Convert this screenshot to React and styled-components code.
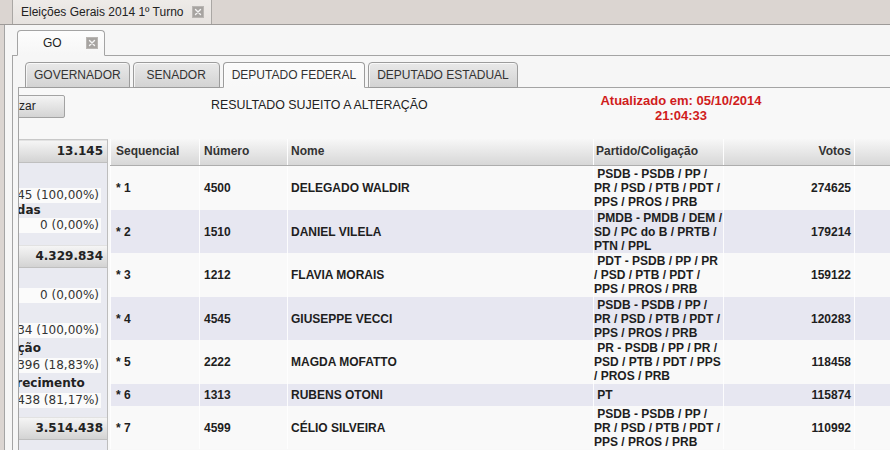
import React from 'react';
import styled, { createGlobalStyle } from 'styled-components';

const Global = createGlobalStyle`
  html, body { margin: 0; padding: 0; background: #dbd5d1; }
  body { font-family: "Liberation Sans", Arial, sans-serif; }
`;

const COLS = '89px 88px 306px 130px 131px 160px';
const LINE = '#a4a4a4';

const Root = styled.div`
  width: 890px;
  height: 450px;
  overflow: hidden;
  background: #dbd5d1;
  font-family: "Liberation Sans", Arial, sans-serif;
  font-size: 12px;
  color: #222;
  display: flex;
  flex-direction: column;
`;

const WindowTabs = styled.div`
  height: 24px;
  flex: none;
  border-bottom: 1px solid #9d9a98;
  display: flex;
  padding-left: 12px;
`;

const WinTab = styled.div`
  display: flex;
  align-items: center;
  gap: 9px;
  height: 24px;
  box-sizing: border-box;
  padding: 0 7px 0 8px;
  border-left: 1px solid #aaa7a4;
  border-right: 1px solid #aaa7a4;
  background: linear-gradient(#eeebe8, #e6e2df);
  color: #222;
`;

const Panel = styled.div`
  flex: 1;
  display: flex;
  flex-direction: column;
  margin-left: ${(p) => p.$indent}px;
  border-left: 1px solid ${LINE};
  border-top: ${(p) => (p.$top ? `1px solid ${LINE}` : 'none')};
  background: ${(p) => p.$bg};
  padding-top: ${(p) => p.$pt}px;
  min-height: 0;
`;

const TabStrip = styled.div`
  display: flex;
  gap: 3px;
  padding-left: 12px;
  flex: none;
`;

const StateTab = styled.div`
  position: relative;
  z-index: 1;
  display: flex;
  align-items: center;
  height: 26px;
  box-sizing: border-box;
  margin-bottom: -1px;
  padding: 0 6px 0 25px;
  border: 1px solid ${LINE};
  border-bottom-color: #f6f6f6;
  border-radius: 4px 4px 0 0;
  background: linear-gradient(#fdfdfd, #f6f6f6);
  color: #222;
  & > svg { margin-left: 24px; }
`;

const Tab = styled.div`
  position: relative;
  z-index: 1;
  height: 26px;
  min-width: 87px;
  box-sizing: border-box;
  margin-bottom: -1px;
  padding: 0 8px;
  border: 1px solid #9c9c9c;
  border-bottom-color: ${(p) => (p.$active ? '#f8f8f8' : '#9c9c9c')};
  border-radius: 4px 4px 0 0;
  background: ${(p) =>
    p.$active ? 'linear-gradient(#fbfbfb, #f8f8f8)' : 'linear-gradient(#e9e9e9, #d3d3d3)'};
  box-shadow: inset 1px 1px 0 rgba(255, 255, 255, 0.7);
  line-height: 24px;
  text-align: center;
  white-space: nowrap;
  color: #333;
`;

const Scroller = styled.div`
  flex: 1;
  overflow: hidden;
`;

const Scrolled = styled.div`
  width: 1300px;
  margin-left: -80px;
`;

const TopBar = styled.div`
  height: 51px;
  box-sizing: border-box;
  padding-top: 7px;
  display: flex;
  align-items: flex-start;
`;

const RefreshButton = styled.div`
  margin-left: 30px;
  width: 96px;
  height: 23px;
  box-sizing: border-box;
  padding-left: 19px;
  border: 1px solid #a3a3a3;
  border-radius: 2px;
  background: linear-gradient(#f4f4f4, #d4d4d4);
  line-height: 21px;
  color: #222;
`;

const Notice = styled.div`
  margin-left: 146px;
  width: 350px;
  padding-top: 3px;
  font-size: 12.4px;
  line-height: 14px;
  color: #222;
`;

const Updated = styled.div`
  width: 240px;
  margin-top: -2px;
  text-align: center;
  font-weight: bold;
  font-size: 13px;
  line-height: 15px;
  color: #d01c1c;
`;

const Body = styled.div`
  display: flex;
  align-items: flex-start;
`;

const SummaryPanel = styled.div`
  width: 169px;
  height: 330px;
  box-sizing: border-box;
  margin-right: 2px;
  border-top: 1px solid #c9c9c9;
  border-right: 1px solid #bdbdbd;
  background: #e9eaf1;
  font-family: "DejaVu Sans", Verdana, sans-serif;
  font-size: 12px;
  color: #222;
`;

const SumHeader = styled.div`
  height: 23px;
  box-sizing: border-box;
  padding-right: 4px;
  border-top: 1px solid #e2e2e2;
  border-bottom: 1px solid #bfbfbf;
  background: linear-gradient(#f5f5f5, #d3d3d3);
  text-align: right;
  font-weight: bold;
  line-height: 21px;
  color: #222;
`;

const SumLabel = styled.div`
  height: ${(p) => p.$h}px;
  line-height: ${(p) => p.$h}px;
  padding-left: ${(p) => 8 + p.$indent}px;
  font-weight: bold;
  white-space: nowrap;
  overflow: hidden;
`;

const SumValue = styled.div`
  height: 15px;
  line-height: 15px;
  margin-right: 6px;
  padding-right: 2px;
  background: #fbfbfb;
  text-align: right;
  white-space: nowrap;
  color: #333;
`;

const SumSpacer = styled.div`
  height: ${(p) => p.$h}px;
`;

const Table = styled.div`
  display: flex;
  flex-direction: column;
`;

const HeadRow = styled.div`
  display: grid;
  grid-template-columns: ${COLS};
  height: 27px;
  box-sizing: border-box;
  border-bottom: 1px solid #adadad;
  background: linear-gradient(#f7f7f7, #d7d7d7);
`;

const HeadCell = styled.div`
  border-left: 1px solid #fdfdfd;
  padding-left: ${(p) => p.$pl}px;
  padding-right: ${(p) => p.$pr}px;
  text-align: ${(p) => p.$align};
  line-height: 25px;
  font-weight: bold;
  color: #333;
  white-space: nowrap;
`;

const Row = styled.div`
  display: grid;
  grid-template-columns: ${COLS};
  min-height: 22px;
  background: ${(p) => (p.$alt ? '#e7e7f1' : '#f9f9f9')};
`;

const Cell = styled.div`
  display: flex;
  flex-direction: column;
  justify-content: center;
  align-items: ${(p) => (p.$align === 'right' ? 'flex-end' : 'flex-start')};
  border-left: 1px solid rgba(255, 255, 255, 0.85);
  padding: 1px ${(p) => p.$pr}px 0.5px ${(p) => p.$pl}px;
  line-height: 14px;
  font-weight: bold;
  color: #1e1e1e;
  white-space: nowrap;
`;

const Line = styled.span`
  display: block;
`;

function CloseIcon() {
  return (
    <svg width="12" height="12" viewBox="0 0 12 12" aria-hidden="true">
      <rect x="0.5" y="0.5" width="11" height="11" fill="#a7a4a1" stroke="#b9b6b3" />
      <path d="M3.5 3.5 L8.5 8.5 M8.5 3.5 L3.5 8.5" stroke="#f4f4f4" strokeWidth="1.4" strokeLinecap="round" />
    </svg>
  );
}

const columns = [
  { title: 'Sequencial', pl: 5, pr: 0, align: 'left' },
  { title: 'Número', pl: 4, pr: 0, align: 'left' },
  { title: 'Nome', pl: 3, pr: 0, align: 'left' },
  { title: 'Partido/Coligação', pl: 2, pr: 0, align: 'left' },
  { title: 'Votos', pl: 0, pr: 3, align: 'right' },
  { title: '', pl: 0, pr: 0, align: 'left' },
];

const FULL = ['\u00a0PSDB - PSDB / PP /', 'PR / PSD / PTB / PDT /', 'PPS / PROS / PRB'];

const candidates = [
  { seq: '* 1', num: '4500', name: 'DELEGADO WALDIR', party: FULL, votes: '274625' },
  { seq: '* 2', num: '1510', name: 'DANIEL VILELA', party: ['\u00a0PMDB - PMDB / DEM /', 'SD / PC do B / PRTB /', 'PTN / PPL'], votes: '179214' },
  { seq: '* 3', num: '1212', name: 'FLAVIA MORAIS', party: ['\u00a0PDT - PSDB / PP / PR', '/ PSD / PTB / PDT /', 'PPS / PROS / PRB'], votes: '159122' },
  { seq: '* 4', num: '4545', name: 'GIUSEPPE VECCI', party: FULL, votes: '120283' },
  { seq: '* 5', num: '2222', name: 'MAGDA MOFATTO', party: ['\u00a0PR - PSDB / PP / PR /', 'PSD / PTB / PDT / PPS', '/ PROS / PRB'], votes: '118458' },
  { seq: '* 6', num: '1313', name: 'RUBENS OTONI', party: ['\u00a0PT'], votes: '115874' },
  { seq: '* 7', num: '4599', name: 'CÉLIO SILVEIRA', party: FULL, votes: '110992' },
];

const summary = [
  { kind: 'header', text: '13.145' },
  { kind: 'label', text: 'Apuradas', h: 25, indent: 0 },
  { kind: 'value', text: '13.145 (100,00%)' },
  { kind: 'label', text: 'Não apuradas', h: 15, indent: 0 },
  { kind: 'value', text: '0 (0,00%)' },
  { kind: 'spacer', h: 12 },
  { kind: 'header', text: '4.329.834' },
  { kind: 'label', text: 'A apurar', h: 20, indent: 0 },
  { kind: 'value', text: '0 (0,00%)' },
  { kind: 'label', text: 'Apurado', h: 20, indent: 0 },
  { kind: 'value', text: '4.329.834 (100,00%)' },
  { kind: 'label', text: 'Abstenção', h: 20, indent: 23 },
  { kind: 'value', text: '815.396 (18,83%)' },
  { kind: 'label', text: 'Comparecimento', h: 20, indent: 23 },
  { kind: 'value', text: '3.514.438 (81,17%)' },
  { kind: 'spacer', h: 9 },
  { kind: 'header', text: '3.514.438' },
];

function Summary() {
  return (
    <SummaryPanel>
      {summary.map((item, i) => {
        if (item.kind === 'header') return <SumHeader key={i}>{item.text}</SumHeader>;
        if (item.kind === 'label')
          return (
            <SumLabel key={i} $h={item.h} $indent={item.indent}>
              {item.text}
            </SumLabel>
          );
        if (item.kind === 'value') return <SumValue key={i}>{item.text}</SumValue>;
        return <SumSpacer key={i} $h={item.h} />;
      })}
    </SummaryPanel>
  );
}

function Results() {
  return (
    <Table>
      <HeadRow>
        {columns.map((c, i) => (
          <HeadCell key={i} $pl={c.pl} $pr={c.pr} $align={c.align}>
            {c.title}
          </HeadCell>
        ))}
      </HeadRow>
      {candidates.map((r, i) => (
        <Row key={r.seq} $alt={i % 2 === 1}>
          <Cell $pl={5} $pr={0}>{r.seq}</Cell>
          <Cell $pl={4} $pr={0}>{r.num}</Cell>
          <Cell $pl={3} $pr={0}>{r.name}</Cell>
          <Cell $pl={0} $pr={0}>
            {r.party.map((l, j) => (
              <Line key={j}>{l}</Line>
            ))}
          </Cell>
          <Cell $pl={0} $pr={3} $align="right">{r.votes}</Cell>
          <Cell $pl={0} $pr={0} />
        </Row>
      ))}
    </Table>
  );
}

export default function App() {
  return (
    <>
      <Global />
      <Root>
        <WindowTabs>
          <WinTab>
            Eleições Gerais 2014 1º Turno
            <CloseIcon />
          </WinTab>
        </WindowTabs>
        <Panel $indent={4} $bg="#f6f6f6" $pt={5}>
          <TabStrip>
            <StateTab>
              GO
              <CloseIcon />
            </StateTab>
          </TabStrip>
          <Panel $indent={7} $top $bg="#f6f6f6" $pt={6}>
            <TabStrip>
              <Tab>GOVERNADOR</Tab>
              <Tab>SENADOR</Tab>
              <Tab $active>DEPUTADO FEDERAL</Tab>
              <Tab>DEPUTADO ESTADUAL</Tab>
            </TabStrip>
            <Panel $indent={5} $top $bg="#f8f8f8" $pt={0}>
              <Scroller>
                <Scrolled>
                  <TopBar>
                    <RefreshButton>Atualizar</RefreshButton>
                    <Notice>RESULTADO SUJEITO A ALTERAÇÃO</Notice>
                    <Updated>
                      Atualizado em: 05/10/2014
                      <br />
                      21:04:33
                    </Updated>
                  </TopBar>
                  <Body>
                    <Summary />
                    <Results />
                  </Body>
                </Scrolled>
              </Scroller>
            </Panel>
          </Panel>
        </Panel>
      </Root>
    </>
  );
}
